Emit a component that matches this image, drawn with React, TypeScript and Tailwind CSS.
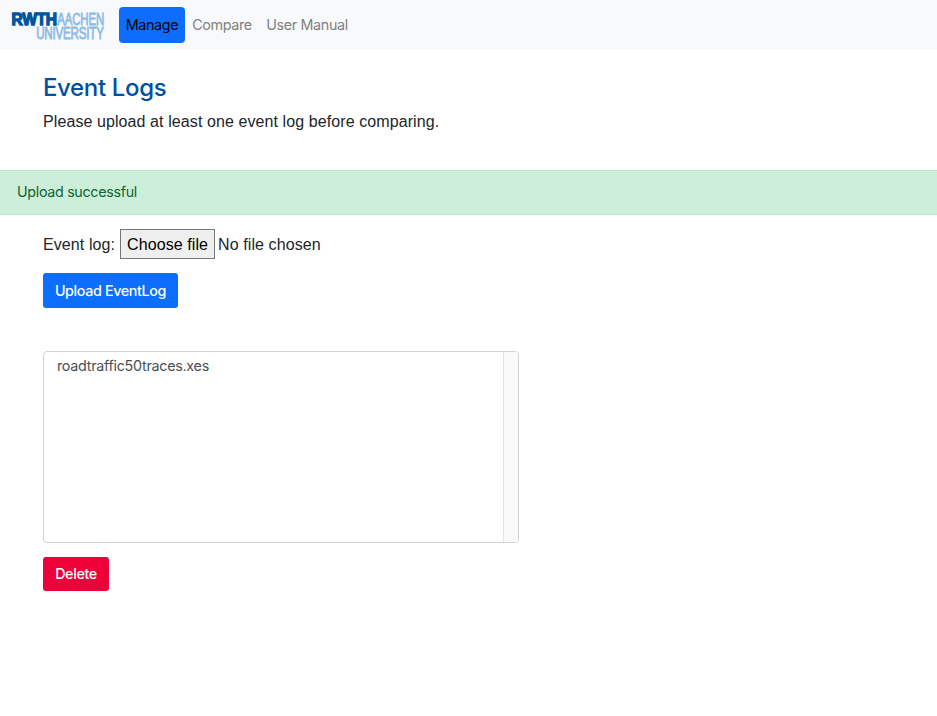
import React from "react";

function Logo() {
  return (
    <svg width="104" height="50" viewBox="0 0 104 50" className="block shrink-0 overflow-visible" role="img" aria-label="RWTH Aachen University">
      <g fontFamily="Liberation Sans, Arial, sans-serif">
        <text x="57.3" y="25.2" fontSize="17" fill="#8ebae5" stroke="#8ebae5" strokeWidth="0.8" textLength="46.7" lengthAdjust="spacingAndGlyphs">AACHEN</text>
        <text x="36.2" y="38.7" fontSize="16.6" fill="#8ebae5" stroke="#8ebae5" strokeWidth="0.8" textLength="67.5" lengthAdjust="spacingAndGlyphs">UNIVERSITY</text>
        <text x="11.6" y="25.2" fontSize="16.6" fontWeight="700" fill="#00549f" stroke="#00549f" strokeWidth="1.3" textLength="45.2" lengthAdjust="spacingAndGlyphs">RWTH</text>
      </g>
    </svg>
  );
}

export default function App() {
  return (
    <div className="min-h-[716px] w-full bg-white font-['Liberation_Sans',Arial,sans-serif] text-base tracking-[0.09px] text-[#212529]">
      <nav className="flex h-[50px] items-center bg-[#f8f9fa] font-['Inter',sans-serif] text-[14.3px] tracking-[-0.32px]">
        <Logo />
        <div className="ml-[15px] flex">
          <a className="flex h-9 w-[66px] items-center justify-center rounded-[4px] bg-[#0d6efd] text-black">Manage</a>
          <a className="flex h-9 w-[74px] items-center justify-center text-[#808183]">Compare</a>
          <a className="flex h-9 w-24 items-center justify-center text-[#808183]">User Manual</a>
        </div>
      </nav>

      <header className="h-[120px] px-[43px] pt-[23px]">
        <h2 className="font-['Inter',sans-serif] text-2xl leading-[30px] font-medium tracking-[-0.35px] text-[#004fa3]">Event Logs</h2>
        <p className="mt-[7px] leading-6">Please upload at least one event log before comparing.</p>
      </header>

      <div role="alert" className="flex h-[45px] items-center border-y border-[#b8e8cb] bg-[#cdefda] pb-0.5 pl-[17px] font-['Inter',sans-serif] text-[14.3px] tracking-[-0.32px] text-[#0a6630]">
        Upload successful
      </div>

      <main className="px-[43px] pt-[14px]">
        <div className="flex h-[30px] items-center">
          <label className="pt-0.5">Event log:</label>
          <button className="ml-[5px] h-[30px] w-[95px] border border-[#767676] bg-[#efefef] pt-0.5 text-black">Choose file</button>
          <span className="ml-[3px] pt-0.5">No file chosen</span>
        </div>
        <button className="mt-[14px] block h-[35px] w-[135px] rounded-[3px] bg-[#0d6efd] font-['Inter',sans-serif] text-[14.3px] font-medium tracking-[-0.36px] text-white">Upload EventLog</button>

        <div className="mt-[43px] flex h-48 w-[476px] overflow-hidden rounded-[4px] border border-[#ced4da] bg-white">
          <div className="flex-1 pt-[3px] pl-[13px] font-['Inter',sans-serif] text-[14.3px] leading-[21px] tracking-[-0.27px] text-[#495057]">roadtraffic50traces.xes</div>
          <div className="w-[15px] border-l border-[#e4e5e6] bg-[#fafafa]" />
        </div>
        <button className="mt-[14px] block h-[34px] w-[66px] rounded-[3px] bg-[#ee0038] font-['Inter',sans-serif] text-[14.3px] font-medium tracking-[-0.36px] text-white">Delete</button>
      </main>
    </div>
  );
}
